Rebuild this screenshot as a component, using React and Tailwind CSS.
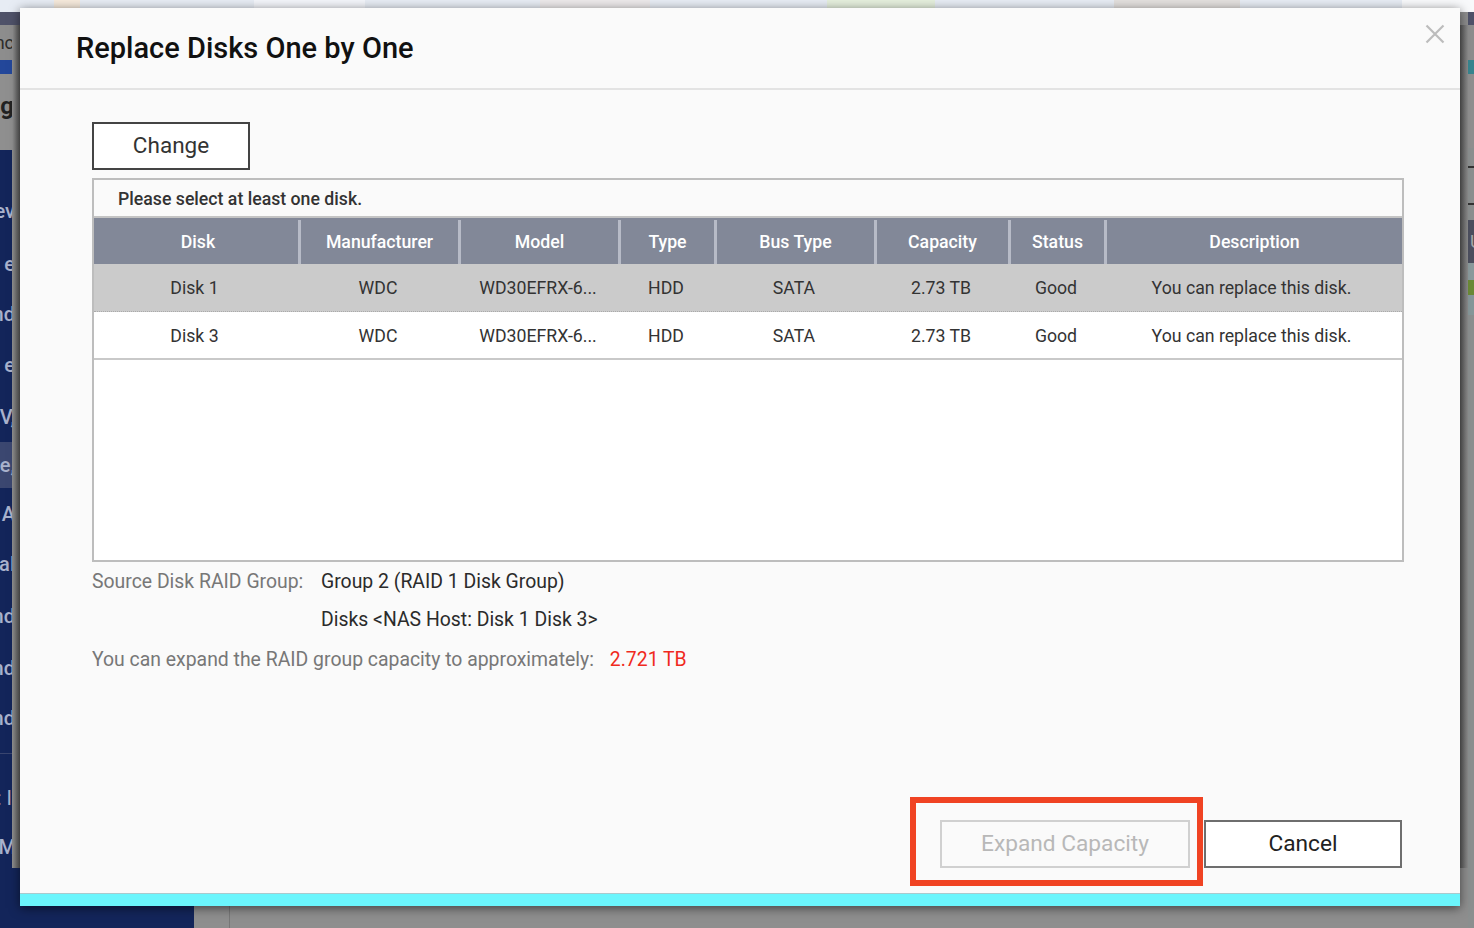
import React from "react";

const columns = [
  { label: "Disk", cell: "w-[207px]" },
  { label: "Manufacturer", cell: "w-[160px]" },
  { label: "Model", cell: "w-[160px]" },
  { label: "Type", cell: "w-[96px]" },
  { label: "Bus Type", cell: "w-[160px]" },
  { label: "Capacity", cell: "w-[134px]" },
  { label: "Status", cell: "w-[96px]" },
  { label: "Description", cell: "w-[295px]" },
];

const rows = [
  ["Disk 1", "WDC", "WD30EFRX-6...", "HDD", "SATA", "2.73 TB", "Good", "You can replace this disk."],
  ["Disk 3", "WDC", "WD30EFRX-6...", "HDD", "SATA", "2.73 TB", "Good", "You can replace this disk."],
];

const sideItems = [
  { text: "ev", box: "h-[54px]" },
  { text: "e", box: "h-[51px]" },
  { text: "nd", box: "h-[50px]" },
  { text: "e", box: "h-[52px]" },
  { text: "V,", box: "h-[51px]" },
  { text: "e,", box: "h-[46px] bg-[#3b4770]" },
  { text: "A", box: "h-[51px]" },
  { text: "al", box: "h-[50px]" },
  { text: "nd", box: "h-[53px]" },
  { text: "nd", box: "h-[51px]" },
  { text: "nd", box: "h-[50px]" },
];

// page that sits dimmed behind the dialog
function Backdrop() {
  return (
    <div className="absolute inset-0 flex flex-col">
      {/* top strip of the desktop */}
      <div className="flex h-3 bg-[#e7ecf4]">
        <div className="ml-[54px] w-[26px] bg-[#f6eadc]" />
        <div className="ml-[174px] w-[111px] bg-[#f3f5fa]" />
        <div className="ml-[175px] w-[110px] bg-[#ece9ea]" />
        <div className="ml-[177px] w-[108px] bg-[#e5efdd]" />
        <div className="ml-[179px] w-[126px] bg-[#e3e0de]" />
        <div className="ml-[162px] flex-1 bg-[#f8f9fb]" />
      </div>
      <div className="flex flex-1">
        {/* left nav, only its right end peeks out */}
        <div className="flex w-[194px] flex-col bg-[#13255a]">
          <div className="h-[13px] bg-[#4f5269]" />
          <div className="flex h-[35px] items-center justify-end overflow-hidden bg-[#8d8d8d] pr-[180px] text-lg text-[#2c2c2c]">
            nc
          </div>
          <div className="h-[14px] bg-[#23479a]" />
          <div className="flex h-[76px] items-center justify-end overflow-hidden bg-[#8f8f8f] pr-[180px] pb-3 text-2xl font-bold text-[#222]">
            ag
          </div>
          <div className="h-[34px]" />
          {sideItems.map((item, i) => (
            <div
              key={i}
              className={`flex items-center justify-end overflow-hidden pr-[179px] text-xl font-medium text-[#a9b2cc] ${item.box}`}
            >
              {item.text}
            </div>
          ))}
          <div className="mt-[10px] h-px w-3 bg-[#39456f]" />
          <div className="mt-[24px] flex h-[40px] items-center justify-end pr-[182px] text-xl whitespace-nowrap text-[#a9b2cc]">
            : I
          </div>
          <div className="mt-[9px] flex h-[40px] items-center justify-end overflow-hidden pr-[178px] text-xl font-medium text-[#a9b2cc]">
            M
          </div>
        </div>
        <div className="relative flex-1 bg-[#8e8e8e]">
          {/* right rail */}
          <div className="absolute top-0 right-0 flex h-full w-1.5 flex-col bg-[#8b8f8f]">
            <div className="h-[13px] bg-[#4f5269]" />
            <div className="h-[35px] bg-[#8d8d8d]" />
            <div className="h-[14px] bg-[#37858f]" />
            <div className="h-[74px] bg-[#8f8f8f]" />
            <div className="h-[20px] border-b-2 border-[#333]" />
            <div className="h-[37px] border-b-2 border-[#333]" />
            <div className="h-[15px]" />
            <div className="flex h-[43px] items-center overflow-hidden bg-[#4c4f5e] pl-0.5 text-lg text-[#a8a8a8]">U</div>
            <div className="h-[17px] bg-[#8a9a9c]" />
            <div className="h-[15px] bg-[#6b8a36]" />
            <div className="h-[20px] bg-[#869799]" />
          </div>
          <div className="absolute bottom-0 left-[35px] h-[30px] w-px bg-[#777]" />
        </div>
      </div>
      <div className="absolute top-[25px] left-3 flex h-[843px] w-[1456px] justify-between bg-[#7d7d7d]">
        <div className="w-2 bg-linear-to-r from-[#919191] to-[#5c5c5c]" />
        <div className="w-2 bg-linear-to-r from-[#5c5c5c] to-[#8c8c8c]" />
      </div>
    </div>
  );
}

function DiskTable() {
  return (
    <div className="flex h-[384px] flex-col border-2 border-[#bdbdbd] bg-white">
      <div className="flex h-[36px] items-center bg-[#fafafa] pt-1 pl-6 text-[17.7px] leading-none font-medium text-[#333]">
        Please select at least one disk.
      </div>
      <div className="flex h-12 border-t-2 border-[#c4c4c4] bg-[#828898]">
        {columns.map((col, i) => (
          <div key={col.label} className={`flex items-center ${col.cell}`}>
            <span
              className={
                i === 0
                  ? "flex-1 pt-0.5 pl-1 text-center text-[17.7px] font-medium text-white"
                  : "flex-1 pt-0.5 text-center text-[17.7px] font-medium text-white"
              }
            >
              {col.label}
            </span>
            {i < columns.length - 1 && <span className="mt-0.5 h-[44px] w-[3px] bg-[#b7bbc7]" />}
          </div>
        ))}
      </div>
      {rows.map((row, r) => (
        <div
          key={r}
          className={
            r === 0
              ? "flex h-[48px] border-b border-dotted border-[#aaa] bg-[#cbcbcb]"
              : "flex h-[48px] border-b-2 border-[#c9c9c9] bg-white"
          }
        >
          {row.map((val, i) => (
            <div
              key={i}
              className={`flex items-center justify-center pt-0.5 pr-[6px] text-[17.7px] whitespace-nowrap text-[#333] ${columns[i].cell}`}
            >
              {val}
            </div>
          ))}
        </div>
      ))}
    </div>
  );
}

export default function App() {
  return (
    <div className="relative h-[928px] w-[1474px] overflow-hidden font-['Roboto',sans-serif]">
      <Backdrop />

      {/* Dialog */}
      <div className="absolute top-2 left-5 flex h-[898px] w-[1440px] flex-col bg-[#fafafa] shadow-[0_2px_10px_rgba(0,0,0,0.55)]">
        <div className="flex h-[82px] items-center justify-between border-b-2 border-[#e3e3e3] pl-[56px]">
          <h1 className="text-[29px] leading-none font-medium text-[#111]">Replace Disks One by One</h1>
        </div>
        <button className="absolute top-4 right-[15px] text-[#bcbcbc]" aria-label="Close">
          <svg width="20" height="20" viewBox="0 0 20 20" fill="none" stroke="currentColor" strokeWidth="2.2">
            <path d="M1.5 1.5 18.5 18.5M18.5 1.5 1.5 18.5" />
          </svg>
        </button>

        <div className="flex flex-1 flex-col pt-8 pr-14 pl-[72px]">
          <button className="h-12 w-[158px] border-2 border-[#444] bg-white text-[22.5px] text-[#333]">Change</button>
          <div className="mt-2">
            <DiskTable />
          </div>

          <div className="flex h-[38px] items-center pt-0.5 text-[19.4px]">
            <span className="w-[229px] text-[#777]">Source Disk RAID Group:</span>
            <span className="text-[#2b2b2b]">Group 2 (RAID 1 Disk Group)</span>
          </div>
          <div className="flex h-[38px] items-center pt-0.5 pl-[229px] text-[19.4px] text-[#2b2b2b]">
            {"Disks <NAS Host: Disk 1 Disk 3>"}
          </div>
          <div className="mt-0.5 flex h-[38px] items-center pt-0.5 text-[19.4px]">
            <span className="text-[#777]">You can expand the RAID group capacity to approximately:</span>
            <span className="ml-4 text-[#f02a1e]">2.721 TB</span>
          </div>

          <div className="mt-auto flex justify-end gap-3.5 pr-0.5 pb-[25px]">
            <button className="h-12 w-[250px] border-2 border-[#d0d0d0] bg-[#fafafa] text-[22.7px] text-[#b8b8b8]" disabled>
              Expand Capacity
            </button>
            <button className="h-12 w-[198px] border-2 border-[#6e6e6e] bg-white text-[22.7px] text-[#222]">Cancel</button>
          </div>
        </div>

        <div className="h-[13px] border-t border-[#a9c9cd] bg-[#6bf5fc]" />

        {/* red callout around the disabled button */}
        <div className="absolute top-[789px] left-[890px] h-[89px] w-[293px] border-[6px] border-[#f04323]" />
      </div>
    </div>
  );
}
